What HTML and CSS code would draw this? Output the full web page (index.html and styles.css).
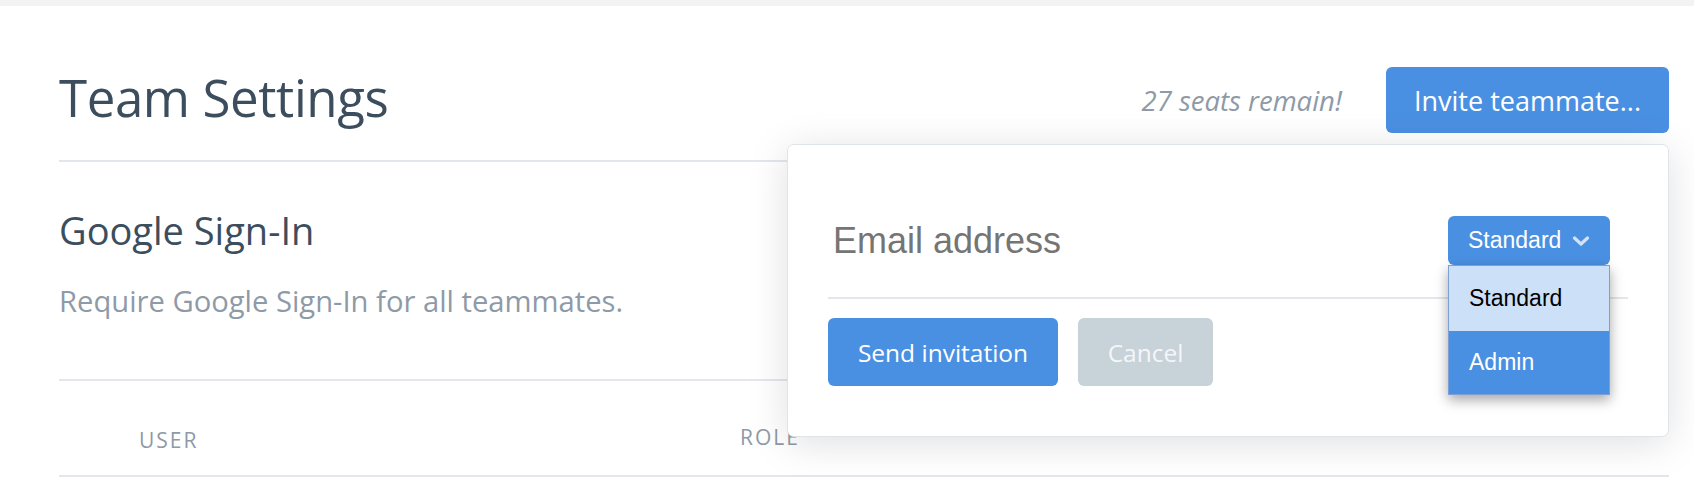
FILE: index.html
```html
<!DOCTYPE html>
<html lang="en">
<head>
<meta charset="utf-8">
<title>Team Settings</title>
<link rel="stylesheet" href="styles.css">
</head>
<body>
<div class="topbar"></div>
<main class="main">
  <header class="header">
    <h1 class="title">Team Settings</h1>
    <div class="actions">
      <span class="seats">27 seats remain!</span>
      <button class="btn btn-invite">Invite teammate...</button>
      <div class="popover">
        <div class="invite-row">
          <input class="email" type="text" placeholder="Email address">
          <div class="select-wrap">
            <div class="select">
              <span>Standard</span>
              <svg class="chev" width="18" height="10" viewBox="0 0 18 10"><path d="M2.5 2 L9 8 L15.5 2" fill="none" stroke="#d3e3f7" stroke-width="3.2" stroke-linecap="round" stroke-linejoin="round"/></svg>
            </div>
            <ul class="options">
              <li class="opt opt-hover">Standard</li>
              <li class="opt opt-sel">Admin</li>
            </ul>
          </div>
        </div>
        <div class="popover-buttons">
          <button class="btn btn-send">Send invitation</button>
          <button class="btn btn-cancel">Cancel</button>
        </div>
      </div>
    </div>
  </header>
  <section class="section">
    <h2 class="section-title">Google Sign-In</h2>
    <p class="section-desc">Require Google Sign-In for all teammates.</p>
  </section>
  <div class="table-head">
    <div class="th th-user">USER</div>
    <div class="th th-role">ROLE</div>
  </div>
</main>
</body>
</html>
```

FILE: styles.css
```css
* { box-sizing: border-box; }
html, body { margin: 0; padding: 0; background: #fff; }
body {
  font-family: "Open Sans", "Noto Sans", sans-serif;
  color: #3c4e5e;
  overflow: hidden;
}
.topbar { height: 6px; background: #f3f3f3; }
.main { padding: 0 25px 0 59px; }

.header {
  display: flex;
  align-items: center;
  justify-content: space-between;
  height: 156px;
  padding: 61px 0 27px;
  border-bottom: 2px solid #e3e7eb;
}
.title {
  margin: 0 0 6px;
  font-size: 51px;
  letter-spacing: -0.4px;
  font-weight: 400;
  line-height: 1;
  color: #3c4e5e;
}
.actions {
  position: relative;
  display: flex;
  align-items: center;
  gap: 44px;
}
.seats {
  font-style: italic;
  font-size: 27.5px;
  color: #8e9aa7;
}
.btn {
  font-family: "Open Sans", "Noto Sans", sans-serif;
  border: 0;
  border-radius: 6px;
  color: #fff;
  background: #4a90e2;
  cursor: pointer;
}
.btn-invite {
  height: 66px;
  width: 283px;
  font-size: 27px;
  padding: 0;
}

.popover {
  position: absolute;
  top: calc(100% + 11px);
  right: 0;
  width: 882px;
  height: 293px;
  background: #fff;
  border: 1px solid #dfe4e9;
  border-radius: 7px;
  box-shadow: 0 6px 40px rgba(0, 0, 0, 0.13);
  padding: 56px 40px 0 40px;
  z-index: 10;
}
.invite-row {
  display: flex;
  align-items: center;
  padding: 15px 18px 32px 0;
  border-bottom: 2px solid #e3e7eb;
}
.email {
  flex: 1;
  border: 0;
  outline: none;
  padding: 0 0 0 5px;
  height: 49px;
  font-family: "Liberation Sans", Arial, sans-serif;
  font-size: 36px;
  color: #333;
  background: transparent;
}
.email::placeholder { color: #757575; }
.select-wrap { position: relative; width: 162px; }
.select {
  height: 49px;
  background: #4a90e2;
  border-radius: 6px;
  display: flex;
  align-items: center;
  padding: 0 0 0 20px;
  gap: 11px;
  font-family: "Liberation Sans", Arial, sans-serif;
  font-size: 23px;
  color: #fff;
}
.chev { display: block; }
.options {
  position: absolute;
  top: 49px;
  left: 0;
  width: 162px;
  margin: 0;
  padding: 0;
  list-style: none;
  border: 1px solid #7d9fd6;
  box-shadow: 0 5px 12px rgba(0, 0, 0, 0.35);
  font-family: "Liberation Sans", Arial, sans-serif;
  font-size: 23px;
}
.opt {
  height: 65px;
  display: flex;
  align-items: center;
  padding-left: 20px;
}
.opt-hover { background: #cce1f8; color: #000; }
.opt-sel { background: #4a90e2; color: #fff; height: 63px; }

.popover-buttons {
  display: flex;
  gap: 20px;
  margin-top: 19px;
}
.btn-send {
  height: 68px;
  width: 230px;
  font-size: 24.5px;
}
.btn-cancel {
  height: 68px;
  width: 135px;
  font-size: 24.5px;
  background: #c8d2d9;
  color: #f4f6f8;
}

.section {
  padding-top: 42px;
  padding-bottom: 58px;
  border-bottom: 2px solid #e3e7eb;
}
.section-title {
  margin: 0;
  font-size: 38px;
  font-weight: 400;
  line-height: normal;
  color: #3c4e5e;
}
.section-desc {
  margin: 25px 0 0;
  font-size: 29.2px;
  line-height: normal;
  color: #8e9aa7;
}

.table-head {
  display: grid;
  grid-template-columns: 681px 1fr;
  padding: 42px 0 21px;
  border-bottom: 2px solid #e3e7eb;
  font-size: 21px;
  letter-spacing: 2px;
  color: #8e9aa7;
  line-height: normal;
}
.th-user { padding-left: 80px; padding-top: 3px; }
```
